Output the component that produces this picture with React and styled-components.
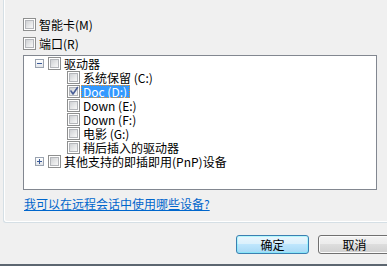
import styled, { createGlobalStyle } from "styled-components";

const GlobalStyle = createGlobalStyle`
  html, body {
    margin: 0;
    padding: 0;
    overflow: hidden;
    background: #f0f0f0;
  }
  body {
    font-family: "Noto Sans CJK SC", "Liberation Sans", sans-serif;
    font-size: 12px;
    color: #000;
  }
`;

const Page = styled.div`
  width: 391px;
  height: 266px;
  display: flex;
  flex-direction: column;
  background: #f0f0f0;
`;

const Panel = styled.div`
  box-sizing: border-box;
  height: 223px;
  margin-left: 3px;
  padding: 18px 0 0 19px;
  border-left: 1px solid #d5dfe5;
  border-bottom: 1px solid #d5dfe5;
  border-bottom-left-radius: 3px;
  box-shadow: inset 1px -1px 0 #ffffff;
  display: flex;
  flex-direction: column;
`;

const CheckRow = styled.label`
  display: flex;
  align-items: center;
  gap: 3px;
  height: 13px;
  line-height: 13px;
  margin-bottom: 6px;
`;

const Box = styled.span`
  box-sizing: border-box;
  position: relative;
  flex: none;
  width: 13px;
  height: 13px;
  border: 1px solid #8e8f8f;
  background: #fff;
  padding: 1px;
  display: block;

  &::after {
    content: "";
    display: block;
    box-sizing: border-box;
    width: 9px;
    height: 9px;
    border: 1px solid #b4b6ba;
    background: linear-gradient(135deg, #cfd1d4 0%, #e6e7e8 55%, #f8f8f8 100%);
  }
`;

const Tick = styled.svg`
  position: absolute;
  left: 1px;
  top: 0px;
  width: 10px;
  height: 10px;
  z-index: 1;
`;

const Tree = styled.div`
  box-sizing: border-box;
  width: 354px;
  height: 135px;
  margin-top: -1px;
  border: 1px solid #828790;
  background: #fff;
  padding-top: 0px;
`;

const Row = styled.div`
  display: flex;
  align-items: center;
  height: 14px;
  padding-left: ${(p) => p.indent}px;
`;

const Expander = styled.span`
  box-sizing: border-box;
  flex: none;
  width: 9px;
  height: 9px;
  margin-right: 4px;
  border: 1px solid #9aa3b0;
  background: linear-gradient(180deg, #ffffff, #e3e6ea);
  position: relative;

  &::before {
    content: "";
    position: absolute;
    left: 1px;
    top: 3px;
    width: 5px;
    height: 1px;
    background: #3b5a98;
  }
  &::after {
    content: "";
    position: absolute;
    left: 3px;
    top: 1px;
    width: 1px;
    height: 5px;
    background: #3b5a98;
    display: ${(p) => (p.open ? "none" : "block")};
  }
`;

const Label = styled.span`
  box-sizing: border-box;
  height: 13px;
  line-height: 12px;
  margin-left: 1px;
  padding: 0 2px 0 1px;
  white-space: nowrap;
  border: 1px solid transparent;
  ${(p) =>
    p.selected &&
    `
    background: #3399ff;
    color: #fff;
    border: 1px dotted #e8902c;
  `}
`;

const Link = styled.a`
  margin-top: 7px;
  margin-left: 1px;
  color: #0066cc;
  text-decoration: underline;
  line-height: 14px;
  cursor: pointer;
`;

const ButtonBar = styled.div`
  display: flex;
  justify-content: flex-end;
  gap: 9px;
  margin-top: 12px;
`;

const Button = styled.button`
  box-sizing: border-box;
  width: 73px;
  height: 19px;
  padding: 0;
  font-family: inherit;
  font-size: 12px;
  line-height: 15px;
  color: #000;
  border-radius: 3px;
  border: 1px solid ${(p) => (p.primary ? "#3c7fb1" : "#707070")};
  box-shadow: inset 0 0 0 1px ${(p) => (p.primary ? "#48fefe55" : "#fbfbfb")};
  background: ${(p) =>
    p.primary
      ? "linear-gradient(180deg, #eaf6fd 0%, #d9f0fc 50%, #bee6fd 50%, #a7d9f5 100%)"
      : "linear-gradient(180deg, #f2f2f2 0%, #ebebeb 50%, #dddddd 50%, #cfcfcf 100%)"};
`;

const BottomEdge = styled.div`
  margin-top: auto;
  height: 2px;
  background: #5c6670;
`;

const Check = ({ checked }) => (
  <Box>
    {checked && (
      <Tick viewBox="0 0 10 10">
        <path
          d="M2 5 L4 8 L8.5 1.5"
          fill="none"
          stroke="#4a5f97"
          strokeWidth="1.6"
          strokeLinecap="round"
          strokeLinejoin="round"
        />
      </Tick>
    )}
  </Box>
);

const drives = [
  { name: "系统保留 (C:)" },
  { name: "Doc (D:)", checked: true, selected: true },
  { name: "Down (E:)" },
  { name: "Down (F:)" },
  { name: "电影 (G:)" },
  { name: "稍后插入的驱动器" },
];

export default function App() {
  return (
    <Page>
      <GlobalStyle />
      <Panel>
        <CheckRow>
          <Check />
          智能卡(M)
        </CheckRow>
        <CheckRow>
          <Check />
          端口(R)
        </CheckRow>
        <Tree>
          <Row indent={11}>
            <Expander open />
            <Check />
            <Label>驱动器</Label>
          </Row>
          {drives.map((d) => (
            <Row key={d.name} indent={43}>
              <Check checked={d.checked} />
              <Label selected={d.selected}>{d.name}</Label>
            </Row>
          ))}
          <Row indent={11}>
            <Expander />
            <Check />
            <Label>其他支持的即插即用(PnP)设备</Label>
          </Row>
        </Tree>
        <Link>我可以在远程会话中使用哪些设备?</Link>
      </Panel>
      <ButtonBar>
        <Button primary>确定</Button>
        <Button>取消</Button>
      </ButtonBar>
      <BottomEdge />
    </Page>
  );
}
